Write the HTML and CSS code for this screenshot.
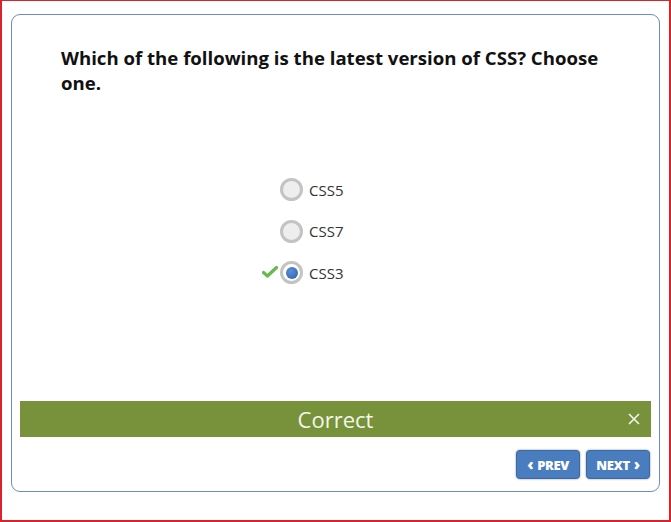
FILE: index.html
```html
<!DOCTYPE html>
<html lang="en">
<head>
<meta charset="utf-8">
<title>Quiz</title>
<link rel="stylesheet" href="styles.css">
</head>
<body>
<div class="frame">
  <div class="panel">
    <h1 class="question">Which of the following is the latest version of CSS? Choose one.</h1>
    <ul class="options">
      <li class="option">
        <span class="mark"></span>
        <span class="radio"></span>
        <span class="label">CSS5</span>
      </li>
      <li class="option">
        <span class="mark"></span>
        <span class="radio"></span>
        <span class="label">CSS7</span>
      </li>
      <li class="option">
        <span class="mark">
          <svg width="16" height="12" viewBox="0 0 16 12"><path d="M1.5 6.5 L5.5 10 L14.5 1.5" fill="none" stroke="#66b84f" stroke-width="3.2" stroke-linecap="round" stroke-linejoin="round"/></svg>
        </span>
        <span class="radio selected"></span>
        <span class="label">CSS3</span>
      </li>
    </ul>
    <div class="feedback">
      <span class="feedback-text">Correct</span>
      <span class="close">
        <svg width="12" height="12" viewBox="0 0 12 12"><path d="M1 1 L11 11 M11 1 L1 11" stroke="#f4f6ea" stroke-width="1.6" fill="none"/></svg>
      </span>
    </div>
    <div class="nav">
      <button class="btn"><span class="chev">&#8249;</span> PREV</button>
      <button class="btn">NEXT <span class="chev">&#8250;</span></button>
    </div>
  </div>
</div>
</body>
</html>
```
FILE: styles.css
```css
html, body {
  margin: 0;
  padding: 0;
  background: #ffffff;
}
.frame {
  box-sizing: border-box;
  width: 671px;
  height: 522px;
  border-style: solid;
  border-color: #d9222a;
  border-width: 1px 2px 2px 2px;
  padding: 13px 10px 0 9px;
}
.panel {
  box-sizing: border-box;
  width: 649px;
  height: 478px;
  border: 1px solid #6b8fb8;
  border-radius: 9px;
  display: flex;
  flex-direction: column;
  font-family: "Open Sans", "DejaVu Sans", sans-serif;
}
.question {
  margin: 30px 0 0 49px;
  width: 560px;
  font-size: 18.6px;
  line-height: 25px;
  font-weight: 700;
  color: #111111;
}
.options {
  list-style: none;
  margin: 83px 0 0 250px;
  padding: 0;
  display: flex;
  flex-direction: column;
  gap: 18.5px;
}
.option {
  display: flex;
  align-items: center;
  height: 23px;
}
.mark {
  width: 18px;
  display: flex;
  align-items: center;
  justify-content: flex-start;
  margin-top: -2px;
}
.radio {
  box-sizing: border-box;
  width: 23px;
  height: 23px;
  border-radius: 50%;
  border: 3px solid #c3c3c3;
  background: #eeeeee;
  display: flex;
  align-items: center;
  justify-content: center;
}
.radio.selected {
  background: #ffffff;
}
.radio.selected::after {
  content: "";
  width: 12px;
  height: 12px;
  border-radius: 50%;
  background: radial-gradient(circle at 40% 35%, #5b8fd6 0%, #3d72bd 60%, #2f5f9f 100%);
}
.label {
  margin-left: 6px;
  font-size: 15px;
  color: #333333;
}
.feedback {
  margin: auto 8px 0 8px;
  height: 36px;
  background: #77923a;
  display: flex;
  align-items: center;
  justify-content: center;
  position: relative;
}
.feedback-text {
  color: #f4f6ea;
  font-size: 22px;
  line-height: 36px;
}
.close {
  position: absolute;
  right: 11px;
  top: 12px;
  display: flex;
}
.nav {
  display: flex;
  justify-content: flex-end;
  gap: 6px;
  margin: 13px 9px 12px 0;
}
.btn {
  box-sizing: border-box;
  width: 64px;
  height: 29px;
  border: 1px solid #3d689f;
  border-radius: 4px;
  background: #4a7dc0;
  box-shadow: 0 0 2px rgba(30, 50, 80, 0.6);
  color: #ffffff;
  font-family: "Open Sans", "DejaVu Sans", sans-serif;
  font-weight: 800;
  font-size: 13px;
  letter-spacing: -0.4px;
  padding: 0;
  display: flex;
  align-items: center;
  justify-content: center;
  gap: 4px;
}
.chev {
  font-size: 16px;
  font-weight: 800;
  line-height: 12px;
  margin-top: -2px;
}
```
